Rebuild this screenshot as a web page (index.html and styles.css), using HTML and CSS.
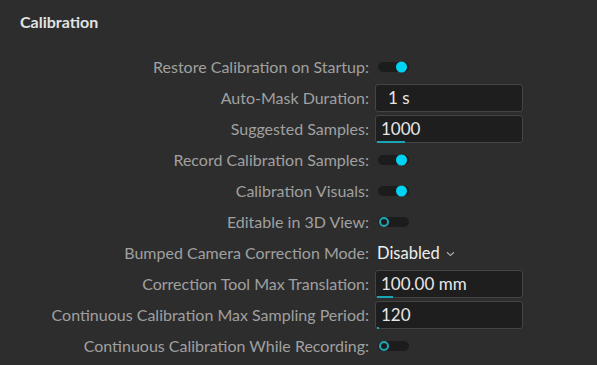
FILE: index.html
```html
<!DOCTYPE html>
<html>
<head>
<meta charset="utf-8">
<link rel="stylesheet" href="styles.css">
</head>
<body>
<div class="panel">
  <div class="title">Calibration</div>
  <div class="form">
    <div class="label">Restore Calibration on Startup:</div>
    <div class="ctl"><span class="toggle on"><span class="knob"></span></span></div>

    <div class="label">Auto-Mask Duration:</div>
    <div class="ctl"><div class="input"><span class="val pad">1 s</span></div></div>

    <div class="label">Suggested Samples:</div>
    <div class="ctl"><div class="input"><span class="val">1000</span><span class="bar" style="width:28px"></span></div></div>

    <div class="label">Record Calibration Samples:</div>
    <div class="ctl"><span class="toggle on"><span class="knob"></span></span></div>

    <div class="label">Calibration Visuals:</div>
    <div class="ctl"><span class="toggle on"><span class="knob"></span></span></div>

    <div class="label">Editable in 3D View:</div>
    <div class="ctl"><span class="toggle off"><span class="knob"></span></span></div>

    <div class="label">Bumped Camera Correction Mode:</div>
    <div class="ctl"><span class="dropdown">Disabled <svg class="chev" width="9" height="6" viewBox="0 0 9 6"><path d="M1 1.2 L4.5 4.5 L8 1.2" fill="none" stroke="#aaa" stroke-width="1.2"/></svg></span></div>

    <div class="label">Correction Tool Max Translation:</div>
    <div class="ctl"><div class="input"><span class="val">100.00 mm</span><span class="bar" style="width:16px"></span></div></div>

    <div class="label">Continuous Calibration Max Sampling Period:</div>
    <div class="ctl"><div class="input"><span class="val">120</span><span class="bar" style="width:2px"></span></div></div>

    <div class="label">Continuous Calibration While Recording:</div>
    <div class="ctl"><span class="toggle off"><span class="knob"></span></span></div>
  </div>
</div>
</body>
</html>
```
FILE: styles.css
```css
html, body {
  margin: 0;
  padding: 0;
  background: #2d2d2d;
  width: 597px;
  height: 365px;
  overflow: hidden;
}
.panel {
  font-family: Lato, "Open Sans", sans-serif;
  font-size: 16px;
  padding: 12px 0 0 20px;
}
.title {
  color: #e2e2e2;
  font-weight: 700;
  font-size: 16px;
  line-height: 20px;
  height: 39px;
}
.form {
  display: grid;
  grid-template-columns: 349px 148px;
  grid-auto-rows: 31px;
  column-gap: 6px;
}
.label {
  color: #a0a0a0;
  text-align: right;
  display: flex;
  align-items: center;
  justify-content: flex-end;
  white-space: nowrap;
}
.ctl {
  display: flex;
  align-items: center;
}
.toggle {
  position: relative;
  width: 31px;
  height: 10px;
  margin-left: 3px;
  background: #1c1c1c;
  border-radius: 5px;
}
.knob {
  position: absolute;
  top: 50%;
  transform: translateY(-50%);
  border-radius: 50%;
  box-sizing: border-box;
}
.toggle.on .knob {
  right: 2px;
  width: 11px;
  height: 11px;
  background: #00d4f5;
}
.toggle.off .knob {
  left: 1px;
  width: 10px;
  height: 10px;
  border: 2px solid #1ca8b8;
  background: transparent;
}
.input {
  position: relative;
  box-sizing: border-box;
  width: 148px;
  height: 28px;
  background: #1e1e1e;
  border: 1px solid #444;
  border-radius: 3px;
  display: flex;
  align-items: center;
  padding-left: 5px;
  color: #e6e6e6;
  font-size: 17px;
}
.val.pad {
  padding-left: 7px;
}
.bar {
  position: absolute;
  left: 1px;
  bottom: -1px;
  height: 2px;
  background: #1aa5b5;
}
.dropdown {
  color: #eeeeee;
  margin-left: 2px;
  font-size: 16.5px;
  display: flex;
  align-items: center;
  gap: 6px;
}
.chev {
  margin-top: 2px;
}
```
